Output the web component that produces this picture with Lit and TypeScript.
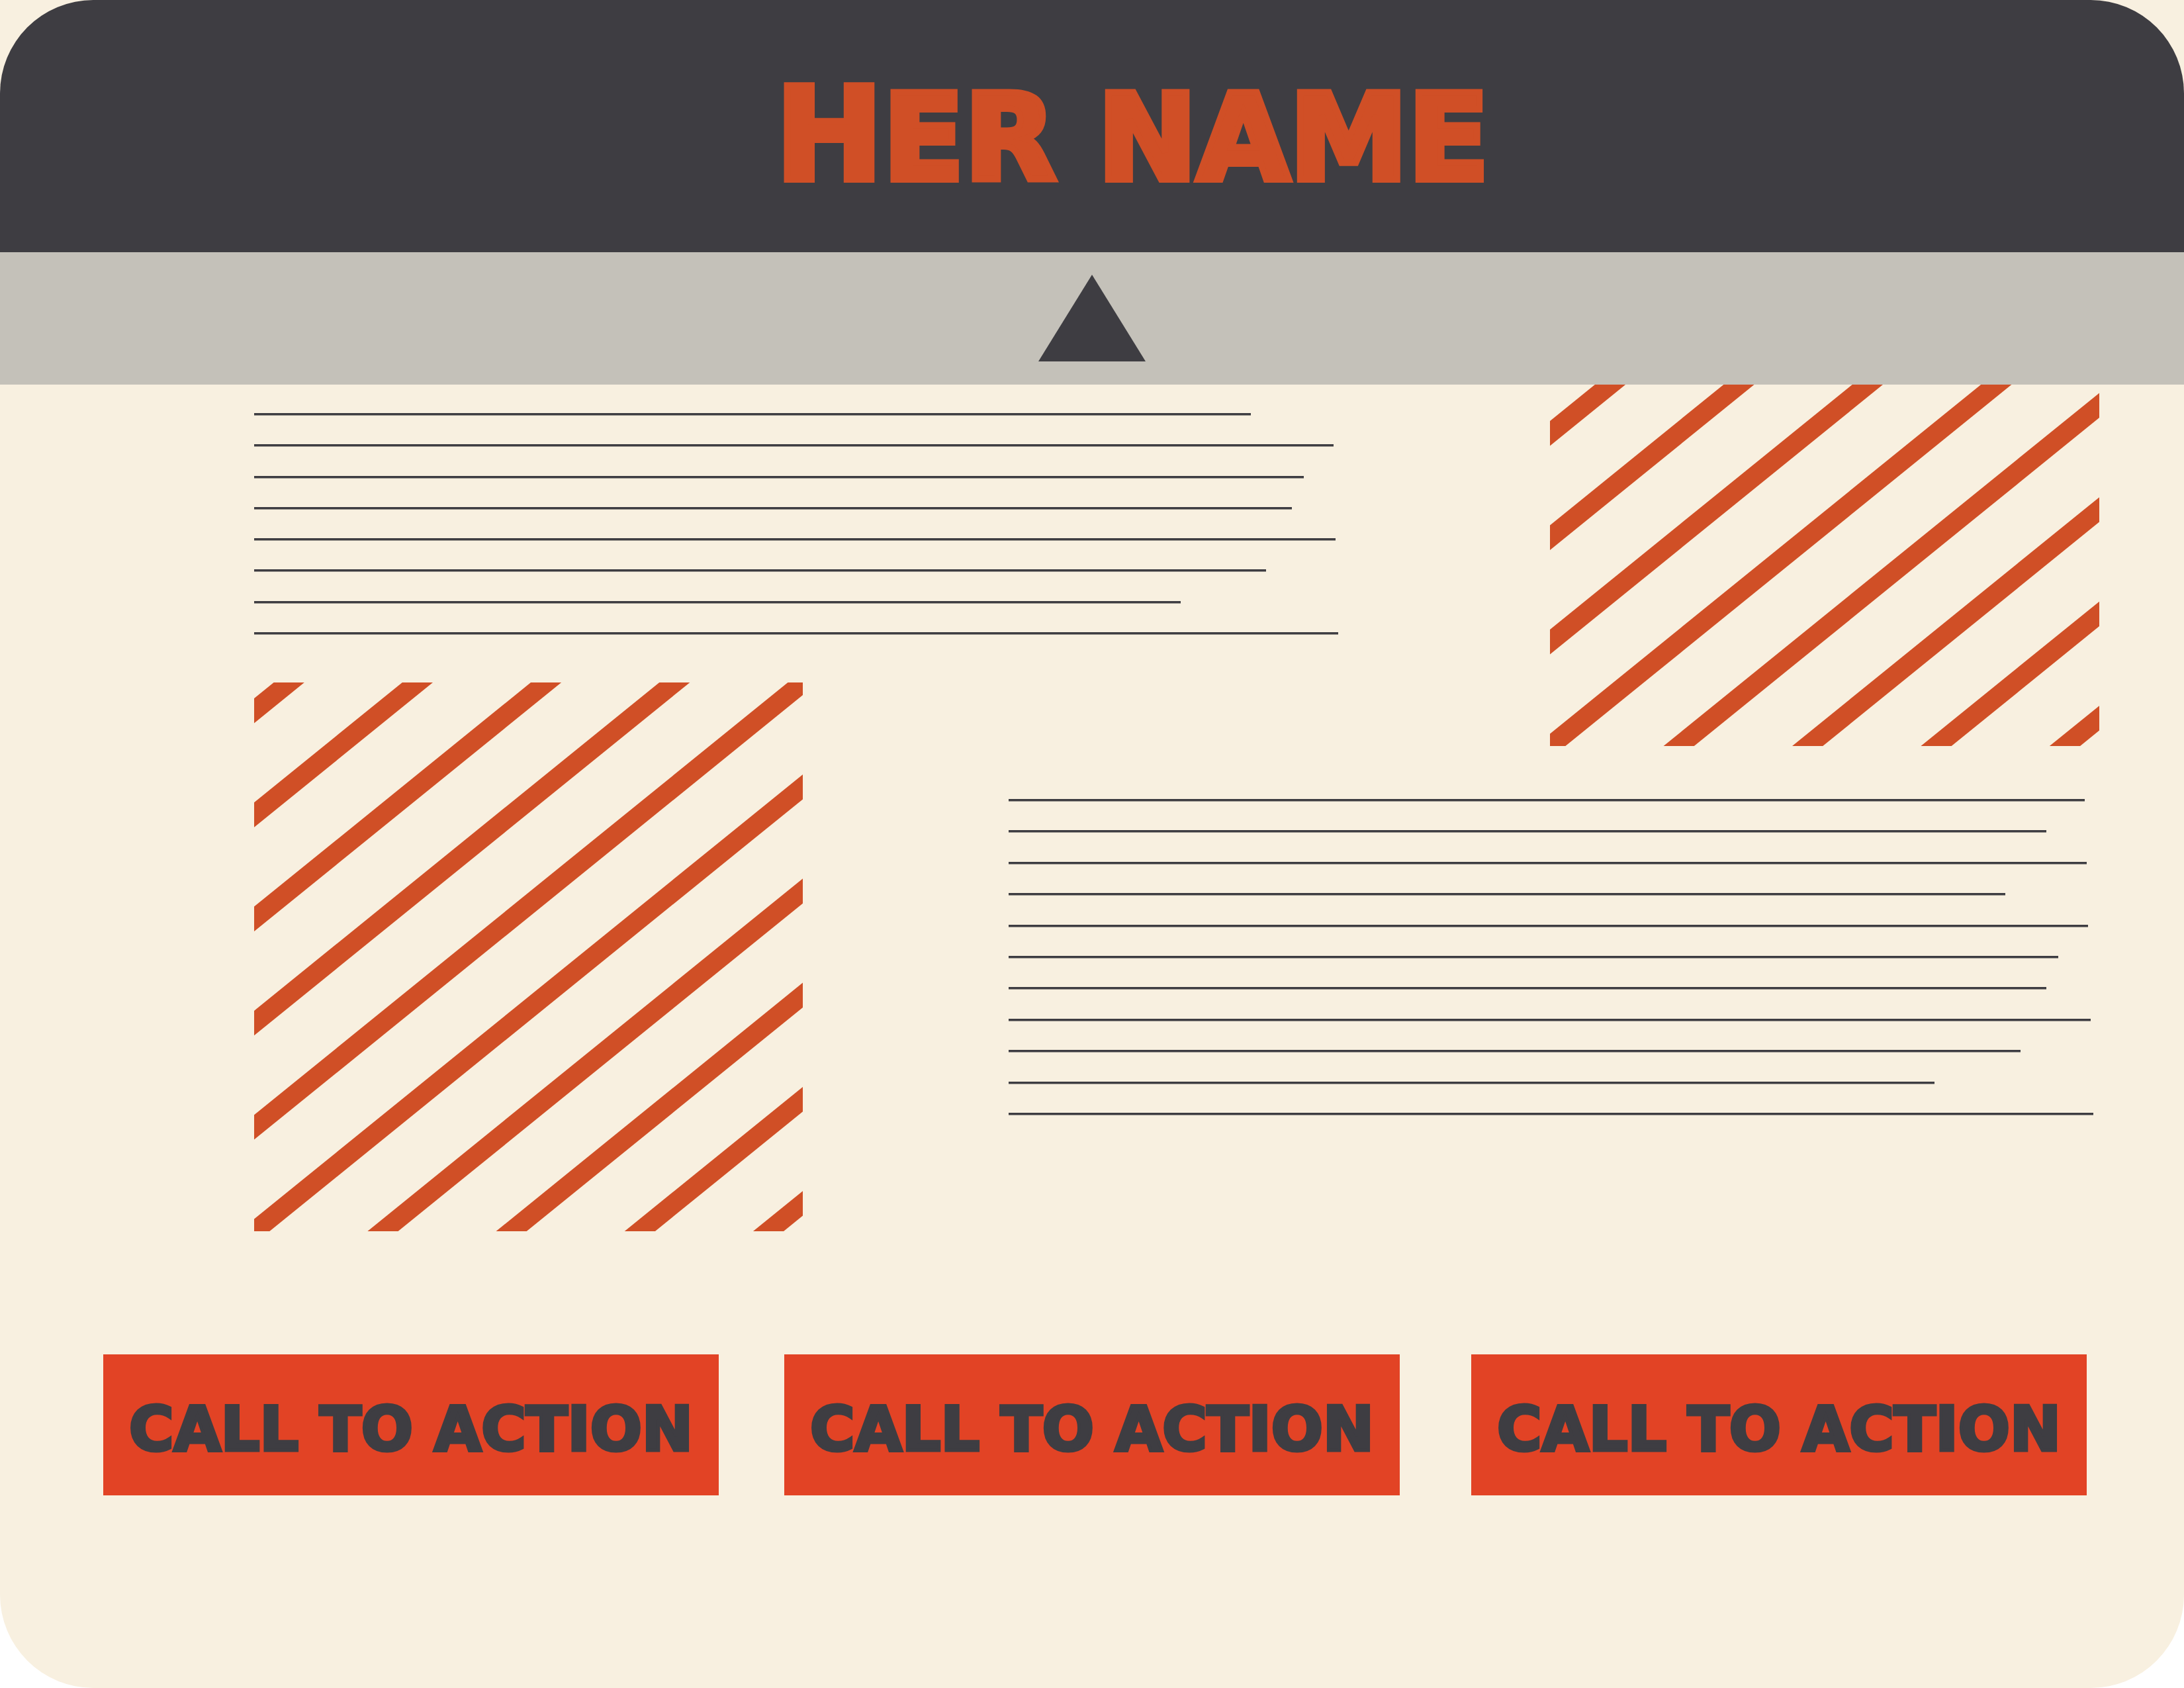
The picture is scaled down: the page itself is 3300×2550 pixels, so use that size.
import { LitElement, html, css, svg } from "lit";
import { customElement, property } from "lit/decorators.js";

/** Placeholder paragraph: one rule per line of copy, each a share of the block's width. */
@customElement("copy-lines")
class CopyLines extends LitElement {
  @property({ attribute: false }) lengths: number[] = [];
  @property({ type: Number }) measure = 1640;

  static styles = css`
    :host {
      display: flex;
      flex-direction: column;
      justify-content: space-between;
    }
    .line {
      height: 4px;
      background: linear-gradient(#3e3d42 3px, #9a968f 3px);
    }
  `;

  render() {
    return this.lengths.map(
      (n) => html`<div class="line" style="width:${(n / this.measure) * 100}%"></div>`
    );
  }
}

/** Placeholder picture: diagonal stripes, cropped from the top when the box is short. */
@customElement("striped-picture")
class StripedPicture extends LitElement {
  static styles = css`
    :host {
      display: block;
      overflow: hidden;
    }
    .stripes {
      display: block;
      width: 100%;
      height: 100%;
      fill: #d04f26;
    }
  `;

  render() {
    const rise = 671.5;
    const thick = 37.4;
    const stripes = Array.from({ length: 10 }, (_, k) => 24 + 157.3 * k);
    return html`
      <svg class="stripes" viewBox="0 0 829 829" preserveAspectRatio="xMidYMax slice" aria-hidden="true">
        ${stripes.map(
          (y) => svg`<polygon points="0,${y} 829,${y - rise} 829,${y - rise + thick} 0,${y + thick}"></polygon>`
        )}
      </svg>
    `;
  }
}

@customElement("app-root")
class AppRoot extends LitElement {
  static styles = css`
    :host {
      display: flex;
      flex-direction: column;
      box-sizing: border-box;
      min-height: 100vh;
      background: #f8f0e0;
      border-radius: 0 0 141px 141px;
      font-family: "DejaVu Sans", sans-serif;
      font-weight: 700;
    }
    .header {
      display: flex;
      align-items: center;
      justify-content: center;
      box-sizing: border-box;
      min-height: 381px;
      padding: 32px 0 0 122px;
      background: #3e3d42;
      border-radius: 141px 141px 0 0;
    }
    .title {
      margin: 0;
      font-size: 194px;
      line-height: 240px;
      color: #d04f26;
      -webkit-text-stroke: 10px #d04f26;
      white-space: nowrap;
    }
    .small {
      font-size: 180px;
    }
    .strip {
      display: flex;
      justify-content: center;
      padding: 34px 0 35px;
      background: #c4c1b9;
    }
    .marker {
      display: block;
      width: 162px;
      height: 131px;
      fill: #3e3d42;
    }
    .content {
      display: grid;
      grid-template-columns: 829fr 311fr 500fr 318fr 830fr;
      grid-template-rows: 450px 96px 80px auto;
      padding: 0 128px 0 384px;
    }
    .intro {
      grid-area: 1 / 1 / 2 / 4;
      margin: 43px 0 72px;
    }
    .picture-right {
      grid-area: 1 / 5 / 3 / 6;
    }
    .picture-left {
      grid-area: 2 / 1 / 5 / 2;
      aspect-ratio: 1;
    }
    .story {
      grid-area: 4 / 3 / 5 / 6;
      height: 478px;
    }
    .actions {
      display: grid;
      grid-template-columns: 930fr 99fr 930fr 108fr 930fr;
      padding: 186px 147px 0 156px;
    }
    .action {
      padding: 54px 0 39px;
      border: 0;
      background: #e24325;
      color: #3e3d42;
      font: inherit;
      font-size: 92px;
      line-height: 120px;
      -webkit-text-stroke: 5px #3e3d42;
      white-space: nowrap;
      cursor: pointer;
    }
    .first {
      grid-column: 1;
    }
    .second {
      grid-column: 3;
    }
    .third {
      grid-column: 5;
    }
  `;

  render() {
    return html`
      <header class="header">
        <h1 class="title">H<span class="small">ER NAME</span></h1>
      </header>
      <div class="strip">
        <svg class="marker" viewBox="0 0 162 131" aria-hidden="true">
          <polygon points="81,0 162,131 0,131"></polygon>
        </svg>
      </div>
      <main class="content">
        <copy-lines
          class="intro"
          .lengths=${[1506, 1631, 1586, 1568, 1634, 1529, 1400, 1638]}
          .measure=${1640}
        ></copy-lines>
        <striped-picture class="picture-right"></striped-picture>
        <striped-picture class="picture-left"></striped-picture>
        <copy-lines
          class="story"
          .lengths=${[1626, 1568, 1629, 1506, 1631, 1586, 1568, 1635, 1529, 1399, 1639]}
          .measure=${1648}
        ></copy-lines>
      </main>
      <nav class="actions">
        <button class="action first" type="button">CALL TO ACTION</button>
        <button class="action second" type="button">CALL TO ACTION</button>
        <button class="action third" type="button">CALL TO ACTION</button>
      </nav>
    `;
  }
}
